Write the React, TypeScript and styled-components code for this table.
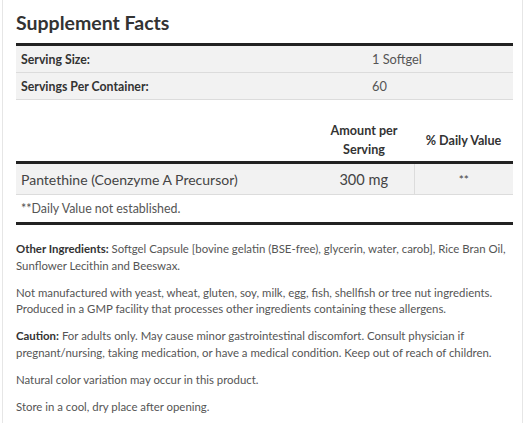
import React from "react";
import styled, { createGlobalStyle } from "styled-components";

const Global = createGlobalStyle`
  html, body { margin: 0; padding: 0; background: #fff; }
  body { font-family: "Lato", "Noto Sans", sans-serif; color: #555; }
`;

const Panel = styled.div`
  margin: 0 6px 0 2px;
  border-left: 1px solid #e6e6e6;
  border-right: 1px solid #e6e6e6;
  padding: 10px 8px 4px 13px;
  height: 423px;
  box-sizing: border-box;
  overflow: hidden;
`;

const Title = styled.h2`
  margin: 0 0 7px 0;
  font-size: 19.5px;
  font-weight: 700;
  color: #333;
  line-height: 26px;
`;

const Table = styled.table`
  width: 497px;
  border-collapse: collapse;
`;

const FactsTable = styled(Table)`
  border-top: 3px solid #222;
`;

const Row = styled.tr<{ $shade?: boolean }>`
  background: ${(p) => (p.$shade ? "#f2f2f2" : "#fff")};
  border-bottom: 1px solid #dcdcdc;
`;

const LabelCell = styled.td`
  padding: 0 5px;
  height: 26px;
  font-size: 12.3px;
  font-weight: 700;
  color: #333;
`;

const ValueCell = styled.td`
  padding: 0 8px;
  font-size: 12.8px;
  color: #555;
  width: 133px;
`;

const Spacer = styled.div`
  height: 21px;
`;

const HeadCell = styled.th<{ $w?: number }>`
  font-size: 12.6px;
  font-weight: 700;
  color: #333;
  line-height: 19px;
  padding: 0 0 2px 0;
  text-align: center;
  width: ${(p) => (p.$w ? `${p.$w}px` : "auto")};
`;

const HeadRow = styled.tr`
  border-bottom: 3px solid #222;
`;

const NameCell = styled.td`
  padding: 0 5px;
  height: 30px;
  font-size: 14px;
  color: #444;
`;

const AmountCell = styled.td`
  text-align: center;
  font-size: 14.6px;
  color: #444;
`;

const DvCell = styled.td`
  text-align: center;
  font-size: 12px;
  color: #444;
  border-left: 1px solid #dcdcdc;
`;

const FootRow = styled.tr`
  border-bottom: 3px solid #222;
`;

const FootCell = styled.td`
  padding: 0 5px;
  height: 27px;
  font-size: 12.4px;
  color: #555;
`;

const Notes = styled.div`
  margin-top: 16px;
`;

const Para = styled.p`
  margin: 0 0 10.5px 0;
  font-size: 11.4px;
  line-height: 16.5px;
  color: #555;
  white-space: nowrap;
  b { font-weight: 700; color: #333; }
`;

export default function App() {
  return (
    <>
      <Global />
      <Panel>
        <Title>Supplement Facts</Title>
        <FactsTable>
          <tbody>
            <Row $shade>
              <LabelCell>Serving Size:</LabelCell>
              <ValueCell>1 Softgel</ValueCell>
            </Row>
            <Row $shade>
              <LabelCell>Servings Per Container:</LabelCell>
              <ValueCell>60</ValueCell>
            </Row>
          </tbody>
        </FactsTable>
        <Spacer />
        <Table>
          <thead>
            <HeadRow>
              <HeadCell />
              <HeadCell $w={100}>
                Amount per
                <br />
                Serving
              </HeadCell>
              <HeadCell $w={99}>% Daily Value</HeadCell>
            </HeadRow>
          </thead>
          <tbody>
            <Row $shade>
              <NameCell>Pantethine (Coenzyme A Precursor)</NameCell>
              <AmountCell>300 mg</AmountCell>
              <DvCell>**</DvCell>
            </Row>
            <FootRow>
              <FootCell colSpan={3}>**Daily Value not established.</FootCell>
            </FootRow>
          </tbody>
        </Table>
        <Notes>
          <Para>
            <b>Other Ingredients:</b> Softgel Capsule [bovine gelatin (BSE-free), glycerin, water, carob], Rice Bran Oil,
            <br />
            Sunflower Lecithin and Beeswax.
          </Para>
          <Para>
            Not manufactured with yeast, wheat, gluten, soy, milk, egg, fish, shellfish or tree nut ingredients.
            <br />
            Produced in a GMP facility that processes other ingredients containing these allergens.
          </Para>
          <Para>
            <b>Caution:</b> For adults only. May cause minor gastrointestinal discomfort. Consult physician if
            <br />
            pregnant/nursing, taking medication, or have a medical condition. Keep out of reach of children.
          </Para>
          <Para>Natural color variation may occur in this product.</Para>
          <Para>Store in a cool, dry place after opening.</Para>
        </Notes>
      </Panel>
    </>
  );
}
